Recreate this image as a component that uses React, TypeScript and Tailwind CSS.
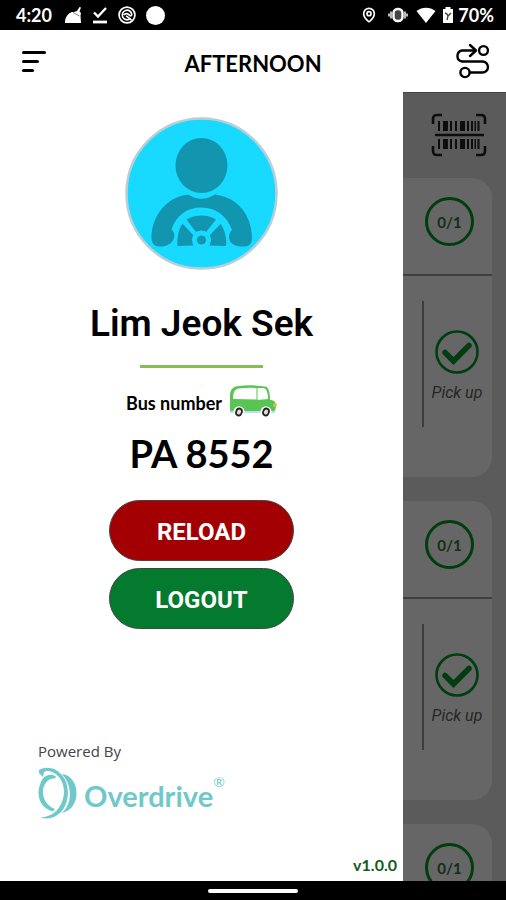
import { MapPin } from 'lucide-react';

interface Stop {
  id: number;
  boarded: number;
  total: number;
  showPickup: boolean;
}

const STOPS: Stop[] = [
  { id: 1, boarded: 0, total: 1, showPickup: true },
  { id: 2, boarded: 0, total: 1, showPickup: true },
  { id: 3, boarded: 0, total: 1, showPickup: false },
];

// x offset and width of each bar in the scanner icon
const BARCODE_BARS = [
  [7, 2],
  [12, 5],
  [19, 2],
  [24, 2],
  [29, 5],
  [36, 2],
  [40, 2],
  [43.5, 1.5],
  [46.5, 2],
];

function StatusBar() {
  return (
    <div className="flex h-[30px] shrink-0 items-center justify-between bg-black pr-3 pl-4 font-['Lato',sans-serif] text-lg font-bold text-white">
      <div className="flex items-center gap-[10px]">
        <span className="mr-[2px]">4:20</span>
        <svg className="h-5 w-[18px]" viewBox="0 0 18 20" fill="currentColor">
          <path d="M1 18 C1 13 3 9 8 7 L10 7 L13 6 L15.5 2 L17 2.6 L15.5 6.5 L17 8 L16.5 10.5 L17 18 Z" />
          <path d="M9 7.5 L15.5 11" stroke="#000" strokeWidth="0.5" fill="none" />
        </svg>
        <svg className="h-5 w-4" viewBox="0 0 16 20" fill="none" stroke="currentColor">
          <path d="M2 7.5 L6 11.5 L14 3" strokeWidth="2.4" />
          <path d="M1 17 H15" strokeWidth="2.8" />
        </svg>
        <svg className="h-[18px] w-[18px]" viewBox="0 0 20 20" fill="none" stroke="currentColor" strokeWidth="1.9">
          <circle cx="10" cy="10" r="8.8" />
          <path d="M13.5 14 A5.3 5.3 0 1 1 15.3 9.5 C14.5 12 13 10.5 12 9.5 C10.5 8 8 8 6.5 10" />
          <path d="M9 11 L15 15.5" />
        </svg>
        <span className="h-[19px] w-[19px] rounded-full bg-white" />
      </div>
      <div className="flex items-center">
        <MapPin className="mr-[11px] h-4 w-4" strokeWidth={2.5} />
        <svg className="mr-2 h-4 w-5" viewBox="0 0 20 16">
          <rect x="5.5" y="2" width="9" height="12" rx="4" fill="#444" stroke="#fff" strokeWidth="2.4" />
          <path d="M3 4.5 V11.5 M17 4.5 V11.5 M1 6.5 V9.5 M19 6.5 V9.5" stroke="#ccc" strokeWidth="1.8" />
        </svg>
        <svg className="mr-1.5 h-4 w-5" viewBox="0 0 20 16" fill="currentColor">
          <path d="M10 16 L0.5 4 C6 -0.5 14 -0.5 19.5 4 Z" />
        </svg>
        <svg className="mr-1 h-4 w-3" viewBox="0 0 12 16">
          <path d="M3.5 0 H8.5 V2 H11 V16 H1 V2 H3.5 Z" fill="#fff" />
          <path d="M3 6 L5 7 L6 9 L9 6 M6 9 L5 13" stroke="#444" strokeWidth="1.4" fill="none" />
        </svg>
        <span>70%</span>
      </div>
    </div>
  );
}

function Header() {
  return (
    <header className="grid h-[62px] shrink-0 grid-cols-[48px_1fr_48px] items-center bg-white px-4 pt-1">
      <button type="button" aria-label="Menu" className="flex flex-col items-start gap-[6px] pb-1 pl-[6px]">
        <span className="h-[3px] w-6 rounded-full bg-black" />
        <span className="h-[3px] w-[17px] rounded-full bg-black" />
        <span className="h-[3px] w-3 rounded-full bg-black" />
      </button>
      <h1 className="text-center font-['Lato',sans-serif] text-[22px] font-bold text-black">AFTERNOON</h1>
      <button type="button" aria-label="Route" className="justify-self-end pb-1">
        <svg className="h-9 w-9" viewBox="0 0 36 36" fill="none" stroke="#000" strokeWidth="2.4" strokeLinecap="round" strokeLinejoin="round">
          <circle cx="29.5" cy="7.5" r="4.4" />
          <circle cx="11" cy="29.5" r="4.6" />
          <path d="M21 7.5 H8 A5.6 5.6 0 0 0 8 18.5 H28.5 A5.5 5.5 0 0 1 28.5 29.5 H16" />
          <path d="M16 2 L22 7.5 L16 13" />
        </svg>
      </button>
    </header>
  );
}

function DriverAvatar() {
  return (
    <svg className="h-[153px] w-[153px]" viewBox="0 0 153 153" role="img" aria-label="Driver">
      <circle cx="76.5" cy="76.5" r="75" fill="#18d9ff" stroke="#b7cfd6" strokeWidth="2.5" />
      <g fill="#1296b0">
        <ellipse cx="76.5" cy="48.5" rx="26" ry="27.5" />
        <path d="M63 77.5 Q76 86 90 77.5 C112 80 127 98 127 121 C127 127 124 129.5 119 129.5 C111 130 104 127 104 120 C104 117 105 115 107 113 C102 99 91 90.5 76.5 90.5 C62 90.5 52 98 46.5 112 C49 115 50 118 49 121 C47 127 41 130 34 129.5 C29 129.5 26.5 126 26.5 120 C27 98 42 80 63 77.5 Z" />
        <path d="M61.5 102.5 C70 97 83 97 91 102.5 L81 115 Q76 112.5 71 115 Z" />
        <path d="M57.5 106.5 L68.5 118.5 Q66 123 69 128.5 L52.5 129 C52 122 53 113 57.5 106.5 Z" />
        <path d="M95.5 107 L84.5 118.5 Q87 123 84 128.5 L101 129 C102 121 99.5 112 95.5 107 Z" />
        <circle cx="76.5" cy="123" r="9.5" fill="#18d9ff" />
        <circle cx="76.5" cy="123" r="4.6" />
      </g>
    </svg>
  );
}

function BusIcon() {
  return (
    <svg className="h-8 w-12" viewBox="0 0 48 32">
      <path d="M1 25 H46 V28 H1 Z" fill="#b9dcf8" />
      <path
        d="M1 25 V9 C2 3 5 1.5 10 1 Q23 -0.5 36 1.5 C40 2.5 41 8 41 15 C45 15 47 17 47 21 C47 24 46 26 44 26 H3 C1.5 26 1 25.5 1 25 Z"
        fill="#57c453"
      />
      <path d="M4 14 C4 7 6 4 10 3.5 Q18 2.5 27.5 3 V14.5 Z M28.5 3 H34 C38 3.5 39 8 39 14 L28.5 15 Z" fill="#fff" />
      <circle cx="46" cy="20" r="2" fill="#e9b83e" />
      <ellipse cx="10" cy="26.5" rx="5.5" ry="5.3" fill="#fff" />
      <ellipse cx="10" cy="27" rx="2.8" ry="3.5" fill="#ddd" stroke="#222" strokeWidth="1.8" transform="rotate(20 10 27)" />
      <ellipse cx="37" cy="26.5" rx="5.5" ry="5.3" fill="#fff" />
      <ellipse cx="37" cy="27" rx="2.8" ry="3.5" fill="#ddd" stroke="#222" strokeWidth="1.8" transform="rotate(20 37 27)" />
    </svg>
  );
}

function OverdriveLogo() {
  return (
    <div className="flex items-start text-[#6fc9cb]">
      <svg className="mr-[7px] h-[52px] w-[39px]" viewBox="0 0 39 52" fill="currentColor">
        <path d="M1 3 C8 -1 17 0 23 7 C32 16 32 34 24 44 C18 51 9 53 2 50.5 C11 50 18 46 22 39 C28 29 27 16 20 9 C15 4 9 3 6 5 L5 10 L1 6 Z" />
        <path d="M24 7 C34 8 39 18 38.5 27 C38 38 32 44 24 46 C35 36 34 18 24 7 Z" />
        <path d="M3 15 C-2 26 0 40 15 44.5 L17 42 C6 38 2.5 26 6.5 18 C9 13 13 11 17 11.5 L18 9.500 C13 6 6 8 3 15 Z" />
      </svg>
      <span className="pt-[13px] font-['Lato',sans-serif] text-[29px] leading-8 font-bold">Overdrive</span>
      <span className="pt-[7px] font-['Lato',sans-serif] text-sm leading-4">®</span>
    </div>
  );
}

function Drawer() {
  return (
    <aside className="flex min-w-0 flex-1 flex-col items-center bg-white pt-[25px] text-black">
      <DriverAvatar />
      <h2 className="mt-8 font-['Roboto',sans-serif] text-[37px] leading-[44px] font-semibold">Lim Jeok Sek</h2>
      <hr className="mt-[19px] w-[123px] border-t-3 border-[#86be55]" />
      <div className="mt-[17px] flex items-end gap-[7px]">
        <span className="font-['Lato',sans-serif] text-lg leading-7 font-bold">Bus number</span>
        <BusIcon />
      </div>
      <p className="mt-4 font-['Lato',sans-serif] text-[38px] leading-10 font-bold">PA 8552</p>
      <div className="mt-[27px] flex w-[185px] flex-col gap-[7px] font-['Roboto',sans-serif] text-2xl font-bold text-white">
        <button type="button" className="h-[61px] rounded-full border border-[#444] bg-[#a30003] pt-[2px]">
          RELOAD
        </button>
        <button type="button" className="h-[61px] rounded-full border border-[#444] bg-[#047a2e] pt-[2px]">
          LOGOUT
        </button>
      </div>
      <footer className="mt-auto w-full pr-[6px] pb-[6px] pl-[38px]">
        <p className="mb-[6px] font-['Open_Sans',sans-serif] text-[15px] leading-5 text-[#444]">Powered By</p>
        <OverdriveLogo />
        <p className="mt-9 text-right font-['Lato',sans-serif] text-base leading-5 font-bold text-[#125a1c]">v1.0.0</p>
      </footer>
    </aside>
  );
}

function ScanIcon() {
  return (
    <svg className="h-11 w-14" viewBox="0 0 56 44" fill="none" stroke="#0d0d0d" strokeWidth="2.6">
      <path d="M2 11 V6 Q2 2 6 2 H11 M45 2 H50 Q54 2 54 6 V11 M54 33 V38 Q54 42 50 42 H45 M11 42 H6 Q2 42 2 38 V33" />
      <path d="M4 22 H53" />
      {BARCODE_BARS.map(([x, width]) => (
        <g key={x} fill="#0d0d0d" stroke="none">
          <rect x={x} y="8" width={width} height="10" />
          <rect x={x} y="26" width={width} height="10" />
        </g>
      ))}
    </svg>
  );
}

function StopCard({ stop }: { stop: Stop }) {
  return (
    <section className="h-[299px] shrink-0 rounded-r-[20px] bg-[#666]">
      <div className="flex h-[98px] items-center justify-center border-b-2 border-[#404040] pb-[10px] pl-1">
        <span className="flex h-[49px] w-[49px] items-center justify-center rounded-full border-3 border-[#003d10] pt-[2px] font-['Lato',sans-serif] text-[15px] font-bold text-[#123018]">
          {stop.boarded}/{stop.total}
        </span>
      </div>
      {stop.showPickup && (
        <div className="mt-[25px] ml-[19px] flex h-[126px] flex-col items-center border-l-2 border-[#3c3c3c] pt-[29px] pr-[2px]">
          <svg className="h-11 w-11 shrink-0" viewBox="0 0 44 44" fill="none" stroke="#003d10">
            <circle cx="22" cy="22" r="20.5" strokeWidth="2.6" />
            <path d="M10 22.5 L18.5 31 L34 15.5" strokeWidth="5.5" strokeLinecap="round" />
          </svg>
          <span className="mt-[9px] font-['Roboto',sans-serif] text-base leading-5 whitespace-nowrap text-[#262626] italic">
            Pick up
          </span>
        </div>
      )}
    </section>
  );
}

export default function App() {
  return (
    <div className="flex h-screen flex-col overflow-hidden bg-white">
      <StatusBar />
      <Header />
      <div className="flex min-h-0 flex-1">
        <Drawer />
        {/* Trip list, dimmed while the drawer is open */}
        <main className="flex w-[103px] shrink-0 flex-col overflow-hidden border-t border-[#444] bg-[#5b5b5b] pr-[14px]">
          <button type="button" aria-label="Scan" className="mt-5 mb-[21px] ml-7 w-14 shrink-0">
            <ScanIcon />
          </button>
          <div className="flex flex-col gap-6">
            {STOPS.map((stop) => (
              <StopCard key={stop.id} stop={stop} />
            ))}
          </div>
        </main>
      </div>
      <div className="flex h-[19px] shrink-0 items-center justify-center bg-black">
        <span className="h-1 w-[90px] rounded-full bg-white" />
      </div>
    </div>
  );
}
